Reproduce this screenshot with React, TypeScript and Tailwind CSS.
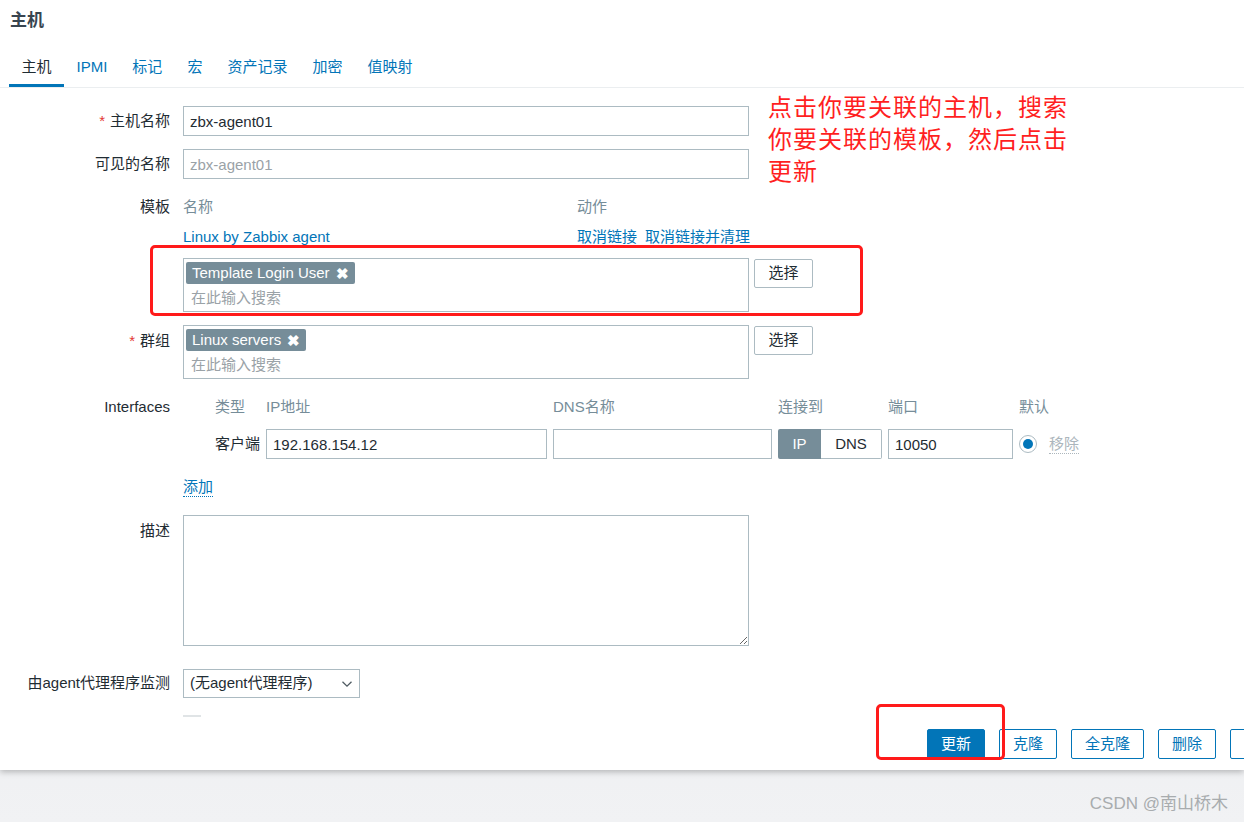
import React from 'react';

const FONT = "font-['Liberation_Sans','Noto_Sans_CJK_SC',sans-serif]";

const Label: React.FC<{ req?: boolean; children: React.ReactNode; className?: string }> = ({ req, children, className = '' }) => (
  <div className={`w-[170px] shrink-0 flex justify-end text-[15px] text-[#1f2c33] ${className}`}>
    {req && <span className="text-[#e33734] mr-[5px]">*</span>}
    {children}
  </div>
);

const Tag: React.FC<{ text: string; width: string }> = ({ text, width }) => (
  <span className={`inline-flex items-center h-[22px] ${width} rounded-[2px] bg-[#768d99] text-white text-[15px] pl-[6px] pr-[6px] justify-between`}>
    {text}
    <span className="text-[15px] font-bold leading-none">✖</span>
  </span>
);

const MultiSelect: React.FC<{ tag: string; tagWidth: string }> = ({ tag, tagWidth }) => (
  <div className="flex gap-[5px] items-start">
    <div className="w-[566px] h-[54px] border border-[#acbbc2] pl-[2px] pt-[2px]">
      <Tag text={tag} width={tagWidth} />
      <div className="pl-[5px] text-[15px] leading-[26px] text-[#9aa2a7]">在此输入搜索</div>
    </div>
    <button className="h-[29px] w-[59px] mt-[1px] border border-[#acbbc2] rounded-[2px] text-[15px] text-[#1f2c33] bg-white">选择</button>
  </div>
);

const Btn: React.FC<{ text: string; w: string; primary?: boolean }> = ({ text, w, primary }) => (
  <button
    className={`h-[30px] ${w} shrink-0 rounded-[2px] border border-[#0275b8] text-[15px] ${
      primary ? 'bg-[#0275b8] text-white' : 'bg-white text-[#0275b8]'
    }`}
  >
    {text}
  </button>
);

export default function App() {
  const tabs = ['主机', 'IPMI', '标记', '宏', '资产记录', '加密', '值映射'];
  return (
    <div className={`relative w-[1244px] h-[822px] overflow-hidden bg-gradient-to-b from-[#cdd2d6] via-[#e6e8eb] to-[#f1f2f4] ${FONT}`}>
      <div className="h-[770px] bg-white shadow-[0_2px_6px_rgba(0,0,0,0.25)]">
        <h1 className="pt-[11px] pl-[10px] text-[17px] leading-[20px] font-bold text-[#384550]">主机</h1>

        {/* tabs */}
        <div className="mt-[20px] flex pl-[9px] border-b border-[#ebeef0]">
          {tabs.map((t, i) => (
            <div
              key={t}
              className={`h-[36px] px-[12.5px] flex items-center text-[15px] border-b-[3px] ${
                i === 0 ? 'border-[#0275b8] text-[#1f2c33]' : 'border-transparent text-[#0275b8]'
              }`}
            >
              {t}
            </div>
          ))}
        </div>

        {/* host name */}
        <div className="mt-[18px] flex items-center gap-[13px]">
          <Label req>主机名称</Label>
          <input
            readOnly
            value="zbx-agent01"
            className="w-[566px] h-[30px] border border-[#acbbc2] px-[6px] text-[15px] text-[#1f2c33] outline-none"
          />
        </div>

        {/* visible name */}
        <div className="mt-[13px] flex items-center gap-[13px]">
          <Label>可见的名称</Label>
          <input
            readOnly
            placeholder="zbx-agent01"
            className="w-[566px] h-[30px] border border-[#acbbc2] px-[6px] text-[15px] placeholder:text-[#9aa2a7] outline-none"
          />
        </div>

        {/* templates */}
        <div className="mt-[19px] flex gap-[13px]">
          <Label className="leading-[18px]">模板</Label>
          <div>
            <div className="flex text-[15px] leading-[18px] text-[#768d99]">
              <span className="w-[394px]">名称</span>
              <span>动作</span>
            </div>
            <div className="mt-[12px] flex text-[15px] leading-[18px] text-[#0275b8]">
              <span className="w-[394px]">Linux by Zabbix agent</span>
              <span className="border-b border-dotted border-[#0275b8]">取消链接</span>
              <span className="ml-[8px] border-b border-dotted border-[#0275b8]">取消链接并清理</span>
            </div>
            <div className="mt-[11px]">
              <MultiSelect tag="Template Login User" tagWidth="w-[169px]" />
            </div>
          </div>
        </div>

        {/* groups */}
        <div className="mt-[13px] flex gap-[13px]">
          <Label req className="pt-[5px]">群组</Label>
          <MultiSelect tag="Linux servers" tagWidth="w-[120px]" />
        </div>

        {/* interfaces */}
        <div className="mt-[19px] flex gap-[13px]">
          <Label className="leading-[18px]">Interfaces</Label>
          <div className="pl-[32px]">
            <div className="grid grid-cols-[45px_281px_219px_104px_125px_80px] gap-x-[6px] text-[15px] leading-[18px] text-[#768d99]">
              <span>类型</span>
              <span>IP地址</span>
              <span>DNS名称</span>
              <span>连接到</span>
              <span>端口</span>
              <span>默认</span>
            </div>
            <div className="mt-[13px] grid grid-cols-[45px_281px_219px_104px_125px_80px] gap-x-[6px] items-center text-[15px]">
              <span className="text-[#1f2c33] text-right">客户端</span>
              <input
                readOnly
                value="192.168.154.12"
                className="h-[30px] border border-[#acbbc2] px-[6px] text-[15px] text-[#1f2c33] outline-none"
              />
              <input readOnly className="h-[30px] border border-[#acbbc2] px-[6px] outline-none" />
              <div className="flex h-[30px]">
                <span className="w-[43px] flex items-center justify-center bg-[#768d99] text-white rounded-l-[2px]">IP</span>
                <span className="flex-1 flex items-center justify-center border border-l-0 border-[#acbbc2] text-[#1f2c33] rounded-r-[2px]">DNS</span>
              </div>
              <input
                readOnly
                value="10050"
                className="h-[30px] border border-[#acbbc2] px-[6px] text-[15px] text-[#1f2c33] outline-none"
              />
              <div className="flex items-center">
                <span className="w-[18px] h-[18px] rounded-full border border-[#acbbc2] flex items-center justify-center">
                  <span className="w-[10px] h-[10px] rounded-full bg-[#0275b8]" />
                </span>
                <span className="ml-[12px] text-[#acb6bc] border-b border-dotted border-[#acb6bc] leading-[18px]">移除</span>
              </div>
            </div>
          </div>
        </div>

        {/* add */}
        <div className="mt-[19px] flex gap-[13px]">
          <div className="w-[170px]" />
          <span className="text-[15px] leading-[18px] text-[#0275b8] border-b border-dotted border-[#0275b8]">添加</span>
        </div>

        {/* description */}
        <div className="mt-[18px] flex gap-[13px]">
          <Label className="pt-[5px]">描述</Label>
          <textarea readOnly className="w-[566px] h-[131px] border border-[#acbbc2] outline-none" />
        </div>

        {/* proxy */}
        <div className="mt-[23px] flex items-center gap-[13px]">
          <Label>由agent代理程序监测</Label>
          <div className="w-[177px] h-[29px] border border-[#acbbc2] flex items-center justify-between px-[6px] text-[15px] text-[#1f2c33]">
            <span>(无agent代理程序)</span>
            <svg width="12" height="8" viewBox="0 0 12 8" fill="none" stroke="#4f5b62" strokeWidth="1.3">
              <path d="M1.5 1.8 6 6.2 10.5 1.8" />
            </svg>
          </div>
        </div>

        <div className="mt-[17px] ml-[183px] w-[18px] h-[2px] bg-[#e0e4e6]" />

        {/* buttons */}
        <div className="mt-[12px] ml-[927px] flex gap-[14px]">
          <Btn text="更新" w="w-[58px]" primary />
          <Btn text="克隆" w="w-[58px]" />
          <Btn text="全克隆" w="w-[73px]" />
          <Btn text="删除" w="w-[58px]" />
          <Btn text="" w="w-[58px]" />
        </div>
      </div>

      <div className="absolute right-[16px] top-[794px] text-[17px] leading-[20px] text-[#a8acae]">CSDN @南山桥木</div>

      {/* annotations */}
      <div className="absolute left-[768px] top-[92px] text-[24px] leading-[32px] tracking-[1px] text-[#ff1f1f]">
        点击你要关联的主机，搜索
        <br />
        你要关联的模板，然后点击
        <br />
        更新
      </div>
      <div className="absolute left-[150px] top-[245px] w-[713px] h-[71px] border-[3px] border-[#ff1a1a] rounded-[5px]" />
      <div className="absolute left-[876px] top-[704px] w-[129px] h-[56px] border-[3px] border-[#ff1a1a] rounded-[5px]" />
    </div>
  );
}
